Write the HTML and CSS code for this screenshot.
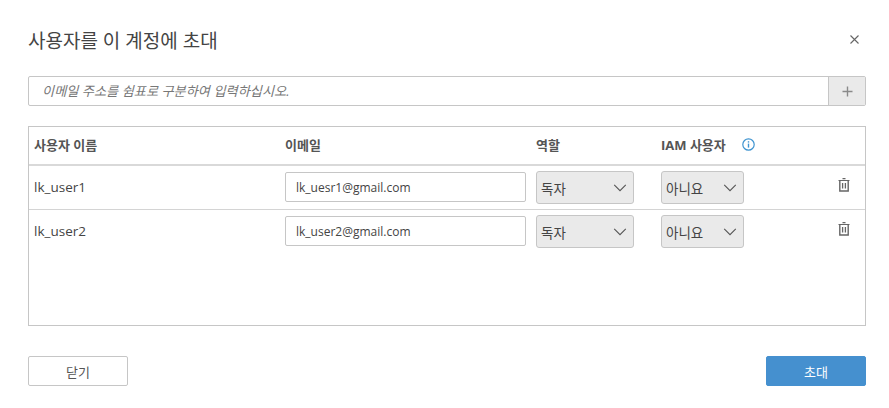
FILE: index.html
```html
<!DOCTYPE html>
<html lang="ko">
<head>
  <meta charset="UTF-8">
  <meta name="viewport" content="width=device-width, initial-scale=1.0">
  <title>사용자를 이 계정에 초대</title>
  <link rel="stylesheet" href="styles.css">
</head>
<body>

<div class="modal">
  <div class="modal-head">
    <h2>사용자를 이 계정에 초대</h2>
    <button class="close-btn" aria-label="닫기">
      <svg width="9" height="9" viewBox="0 0 9 9"><path d="M0.5 0.5L8.5 8.5M8.5 0.5L0.5 8.5" stroke="#666" stroke-width="1.1" fill="none"/></svg>
    </button>
  </div>

  <div class="add-row">
    <div class="add-input">이메일 주소를 쉼표로 구분하여 입력하십시오.</div>
    <button class="add-btn" aria-label="추가">
      <svg width="11" height="11" viewBox="0 0 11 11"><path d="M5.5 0.5V10.5M0.5 5.5H10.5" stroke="#8a8a8a" stroke-width="1.4" fill="none"/></svg>
    </button>
  </div>

  <div class="user-table">
    <div class="user-row head">
      <div>사용자 이름</div>
      <div>이메일</div>
      <div>역할</div>
      <div class="iam-head">IAM 사용자
        <svg class="info" width="13" height="13" viewBox="0 0 13 13"><circle cx="6.5" cy="6.5" r="5.7" stroke="#3f94d0" stroke-width="1.2" fill="none"/><path d="M6.5 5.6V9.6" stroke="#3f94d0" stroke-width="1.4"/><path d="M6.5 3.2V4.6" stroke="#3f94d0" stroke-width="1.4"/></svg>
      </div>
      <div></div>
    </div>

    <div class="user-row">
      <div class="name">lk_user1</div>
      <div class="email-box">lk_uesr1@gmail.com</div>
      <div class="pick role"><span>독자</span>
        <svg width="14" height="8" viewBox="0 0 15 9"><path d="M1 1L7.5 7.5L14 1" stroke="#555" stroke-width="1.2" fill="none"/></svg>
      </div>
      <div class="pick iam"><span>아니요</span>
        <svg width="14" height="8" viewBox="0 0 15 9"><path d="M1 1L7.5 7.5L14 1" stroke="#555" stroke-width="1.2" fill="none"/></svg>
      </div>
      <div class="trash">
        <svg width="12" height="14" viewBox="0 0 12 14"><path d="M4.5 0.7H7.5M0.5 2.5H11.5" stroke="#666" stroke-width="1.2" fill="none"/><path d="M1.8 2.5V13H10.2V2.5" stroke="#666" stroke-width="1.4" fill="none"/><path d="M4.6 5V10.5M7.4 5V10.5" stroke="#666" stroke-width="1.3" fill="none"/></svg>
      </div>
    </div>

    <div class="user-row">
      <div class="name">lk_user2</div>
      <div class="email-box">lk_user2@gmail.com</div>
      <div class="pick role"><span>독자</span>
        <svg width="14" height="8" viewBox="0 0 15 9"><path d="M1 1L7.5 7.5L14 1" stroke="#555" stroke-width="1.2" fill="none"/></svg>
      </div>
      <div class="pick iam"><span>아니요</span>
        <svg width="14" height="8" viewBox="0 0 15 9"><path d="M1 1L7.5 7.5L14 1" stroke="#555" stroke-width="1.2" fill="none"/></svg>
      </div>
      <div class="trash">
        <svg width="12" height="14" viewBox="0 0 12 14"><path d="M4.5 0.7H7.5M0.5 2.5H11.5" stroke="#666" stroke-width="1.2" fill="none"/><path d="M1.8 2.5V13H10.2V2.5" stroke="#666" stroke-width="1.4" fill="none"/><path d="M4.6 5V10.5M7.4 5V10.5" stroke="#666" stroke-width="1.3" fill="none"/></svg>
      </div>
    </div>
  </div>

  <div class="modal-foot">
    <button class="btn">닫기</button>
    <button class="btn primary">초대</button>
  </div>
</div>

</body>
</html>
```

FILE: styles.css
```css
body {
  margin: 0;
  background: #fff;
  color: #444;
  font-family: "Open Sans", "Noto Sans CJK KR", sans-serif;
  font-size: 13px;
}
.modal {
  padding: 0 23px 0 28px;
}
.modal-head {
  display: flex;
  justify-content: space-between;
  align-items: center;
  box-sizing: border-box;
  width: 838px;
  height: 76px;
  padding-top: 3px;
}
h2 {
  margin: 0;
  font-size: 19px;
  font-weight: 400;
  color: #444;
}
.close-btn {
  display: flex;
  padding: 0;
  margin-right: 7px;
  border: none;
  background: none;
}
.add-row {
  display: flex;
  height: 30px;
  box-sizing: border-box;
  width: 838px;
  border: 1px solid #c6c6c6;
  border-radius: 2px;
}
.add-input {
  flex: 1;
  padding-left: 13px;
  line-height: 29px;
  font-size: 13.2px;
  font-style: italic;
  color: #777;
}
.add-btn {
  display: flex;
  align-items: center;
  justify-content: center;
  width: 37px;
  padding: 0;
  border: none;
  border-left: 1px solid #c6c6c6;
  background: #eaeaea;
}
.user-table {
  box-sizing: border-box;
  width: 838px;
  height: 200px;
  margin-top: 20px;
  border: 1px solid #c6c6c6;
}
.user-row {
  display: grid;
  grid-template-columns: 251px 251px 125px 83px 1fr;
  align-items: center;
  height: 44px;
  box-sizing: border-box;
  padding-left: 5px;
  padding-bottom: 1px;
  border-bottom: 1px solid #d4d4d4;
}
.user-row:last-child {
  border-bottom-color: transparent;
}
.user-row.head {
  height: 39px;
  padding-bottom: 2px;
  border-bottom: 2px solid #d9d9d9;
  font-weight: 700;
  color: #555;
  font-size: 13px;
}
.iam-head {
  display: flex;
  align-items: center;
  white-space: nowrap;
}
.info {
  flex-shrink: 0;
  margin-left: 16px;
}
.name {
  padding-bottom: 1px;
  font-size: 13.5px;
}
.email-box {
  box-sizing: border-box;
  width: 241px;
  height: 30px;
  padding-left: 10px;
  line-height: 29px;
  font-size: 12px;
  border: 1px solid #c6c6c6;
  border-radius: 2px;
}
.pick {
  display: flex;
  align-items: center;
  justify-content: space-between;
  box-sizing: border-box;
  height: 33px;
  margin-top: 1px;
  padding: 0 6px 0 4px;
  font-size: 13.5px;
  background: #eaeaea;
  border: 1px solid #c6c6c6;
  border-radius: 3px;
}
.pick.role {
  width: 98px;
}
.pick.iam {
  width: 83px;
}
.trash {
  display: flex;
  justify-content: flex-end;
  padding-right: 15px;
  margin-top: -4px;
}
.modal-foot {
  display: flex;
  justify-content: space-between;
  width: 838px;
  margin-top: 30px;
}
.btn {
  width: 100px;
  height: 30px;
  padding: 0;
  background: #fff;
  color: #555;
  border: 1px solid #c6c6c6;
  border-radius: 2px;
  font-family: inherit;
  font-size: 13px;
}
.btn.primary {
  background: #4590cf;
  border-color: #4590cf;
  color: #fff;
}
```
